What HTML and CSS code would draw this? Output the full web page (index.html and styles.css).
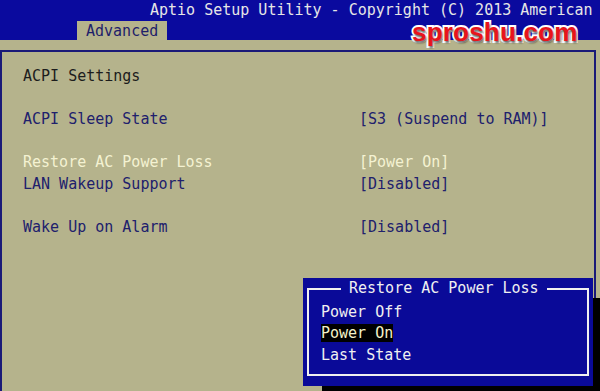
FILE: index.html
```html
<!DOCTYPE html>
<html lang="en">
    <head>
        <meta name="viewport" content="width=device-width, initial-scale=1.0">
        <title>Aptio Setup Utility</title>
        <link rel="stylesheet" href="styles.css">
    </head>
    <body>
        <header class="topbar">
            <div class="title">Aptio Setup Utility - Copyright (C) 2013 American</div>
            <div class="tabs"><span class="tab">Advanced</span></div>
        </header>
        <div class="watermark">sproshu.com</div>
        <div class="gap"></div>
        <main class="panel">
            <div class="row heading">ACPI Settings</div>
            <div class="row"></div>
            <div class="row"><span class="label">ACPI Sleep State</span><span class="value">[S3 (Suspend to RAM)]</span></div>
            <div class="row"></div>
            <div class="row selected"><span class="label">Restore AC Power Loss</span><span class="value">[Power On]</span></div>
            <div class="row"><span class="label">LAN Wakeup Support</span><span class="value">[Disabled]</span></div>
            <div class="row"></div>
            <div class="row"><span class="label">Wake Up on Alarm</span><span class="value">[Disabled]</span></div>
        </main>
        <div class="popup">
            <fieldset class="popup-box">
                <legend>Restore AC Power Loss</legend>
                <div class="option">Power Off</div>
                <div class="option"><span class="current">Power On</span></div>
                <div class="option">Last State</div>
            </fieldset>
        </div>
    </body>
</html>
```
FILE: styles.css
```css
body {
    margin: 0;
    width: 600px;
    height: 391px;
    overflow: hidden;
    position: relative;
    background-color: #b5b38c;
    font-family: "DejaVu Sans Mono", "Liberation Mono", monospace;
    font-size: 15px;
}

.topbar {
    height: 40px;
    background-color: #0a0a9e;
    overflow: hidden;
}

.title {
    padding-left: 150px;
    height: 21px;
    line-height: 21px;
    color: #e6e6e6;
    white-space: nowrap;
}

.tabs {
    padding-left: 77px;
}

.tab {
    display: inline-block;
    width: 81px;
    height: 19px;
    line-height: 21px;
    padding-left: 9px;
    background-color: #b5b38c;
    color: #1e1e6a;
}

.watermark {
    position: absolute;
    left: 412px;
    top: 17px;
    font-family: "Liberation Sans", Arial, sans-serif;
    font-weight: bold;
    font-size: 26px;
    letter-spacing: 0.2px;
    color: #e8141c;
    -webkit-text-stroke: 4px #ffffff;
    paint-order: stroke fill;
    text-shadow: 1px 2px 2px rgba(0, 0, 0, 0.6);
}

.gap {
    height: 10px;
}

.panel {
    margin-right: 4px;
    height: 341px;
    box-sizing: border-box;
    border-top: 2px solid #1a1a78;
    border-left: 2px solid #1a1a78;
    border-right: 2px solid #1a1a78;
    padding: 14px 0 0 21px;
}

.row {
    display: flex;
    height: 21.5px;
    line-height: 21.5px;
    color: #20206c;
    white-space: nowrap;
}

.row.heading {
    color: #1c1c1c;
}

.row.selected {
    color: #f4f2d2;
}

.label {
    width: 336px;
}

.popup {
    position: absolute;
    left: 303px;
    top: 278px;
    width: 290px;
    height: 108px;
    box-sizing: border-box;
    padding: 0 4px 10px 4px;
    background-color: #0a0a98;
    box-shadow: 19px 20px 0 #000000;
}

.popup-box {
    margin: 0;
    height: 98px;
    box-sizing: border-box;
    padding: 2px 0 0 12px;
    border: 2px solid #f0f0f0;
    color: #f0f0f0;
    min-width: 0;
}

.popup-box legend {
    margin-left: 20px;
    padding: 0 8px;
    line-height: 21.5px;
}

.option {
    height: 21.5px;
    line-height: 21.5px;
}

.current {
    background-color: #000000;
    color: #f4f2c8;
}
```
